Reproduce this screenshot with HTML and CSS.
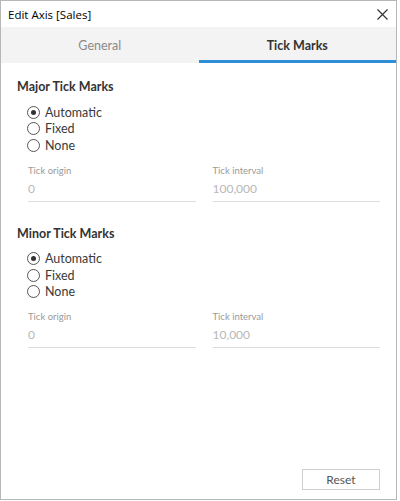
FILE: index.html
```html
<!DOCTYPE html>
<html>
<head>
<meta charset="utf-8">
<link rel="stylesheet" href="styles.css">
</head>
<body>
<div class="window">
  <div class="titlebar">
    <span class="title">Edit Axis [Sales]</span>
    <svg class="close" width="11" height="11" viewBox="0 0 11 11"><path d="M0.5 0.5 L10.5 10.5 M10.5 0.5 L0.5 10.5" stroke="#333" stroke-width="1.2" fill="none"/></svg>
  </div>
  <div class="tabs">
    <div class="tab">General</div>
    <div class="tab active">Tick Marks</div>
  </div>
  <div class="content">
    <section class="group">
      <h2 class="heading">Major Tick Marks</h2>
      <div class="radios">
        <label class="radio"><span class="dot checked"></span>Automatic</label>
        <label class="radio"><span class="dot"></span>Fixed</label>
        <label class="radio"><span class="dot"></span>None</label>
      </div>
      <div class="fields">
        <div class="field"><div class="flabel">Tick origin</div><div class="fvalue">0</div></div>
        <div class="field"><div class="flabel">Tick interval</div><div class="fvalue">100,000</div></div>
      </div>
    </section>
    <section class="group">
      <h2 class="heading">Minor Tick Marks</h2>
      <div class="radios">
        <label class="radio"><span class="dot checked"></span>Automatic</label>
        <label class="radio"><span class="dot"></span>Fixed</label>
        <label class="radio"><span class="dot"></span>None</label>
      </div>
      <div class="fields">
        <div class="field"><div class="flabel">Tick origin</div><div class="fvalue">0</div></div>
        <div class="field"><div class="flabel">Tick interval</div><div class="fvalue">10,000</div></div>
      </div>
    </section>
  </div>
  <div class="footer">
    <button class="reset">Reset</button>
  </div>
</div>
</body>
</html>
```

FILE: styles.css
```css
html, body { margin: 0; padding: 0; background: #fff; }
body { font-family: "Lato", "Roboto", sans-serif; color: #333; }
.window {
  box-sizing: border-box;
  width: 397px;
  height: 500px;
  border: 1px solid #b7b7b7;
  display: flex;
  flex-direction: column;
  background: #fff;
}
.titlebar {
  height: 26px;
  display: flex;
  align-items: center;
  justify-content: space-between;
  padding: 0 8px 0 7px;
  font-family: "Open Sans", "Noto Sans", sans-serif;
  font-size: 11.5px;
  color: #000;
}
.close { display: block; }
.tabs {
  height: 36px;
  display: flex;
  background: #f3f3f3;
}
.tab {
  flex: 1;
  display: flex;
  align-items: center;
  justify-content: center;
  font-size: 12.5px;
  color: #8a8a8a;
  box-sizing: border-box;
  border-bottom: 3px solid transparent;
  padding-top: 3px;
}
.tab.active {
  color: #333;
  font-weight: bold;
  border-bottom-color: #2e8ed8;
}
.content { flex: 1; padding: 0 16px 0 16px; }
.group { padding-top: 16px; }
.group + .group { padding-top: 24px; }
.heading { margin: 0; font-size: 12.5px; font-weight: bold; color: #333; line-height: 16px; }
.radios { display: flex; flex-direction: column; padding: 9px 0 0 10px; }
.radio { display: flex; align-items: center; height: 16.5px; font-size: 12.5px; color: #3a3a3a; }
.dot {
  box-sizing: border-box;
  width: 13px; height: 13px;
  border: 1px solid #555;
  border-radius: 50%;
  margin-right: 5px;
  display: flex; align-items: center; justify-content: center;
}
.dot.checked::after {
  content: "";
  width: 5px; height: 5px; border-radius: 50%; background: #333;
}
.fields { display: flex; gap: 17px; padding: 11px 0 0 11px; }
.field { flex: 1; border-bottom: 1px solid #dcdcdc; padding-bottom: 4px; }
.flabel { font-size: 9.5px; color: #9a9a9a; line-height: 12px; }
.fvalue { font-size: 12px; color: #b8b8b8; line-height: 16px; margin-top: 4px; }
.footer { display: flex; justify-content: flex-end; padding: 0 16px 9px 0; }
.reset {
  width: 78px; height: 21px;
  background: #fff;
  border: 1px solid #cfcfcf;
  font-family: "Lato", "Roboto", sans-serif;
  font-size: 12px; color: #555;
  padding: 0;
}
```
